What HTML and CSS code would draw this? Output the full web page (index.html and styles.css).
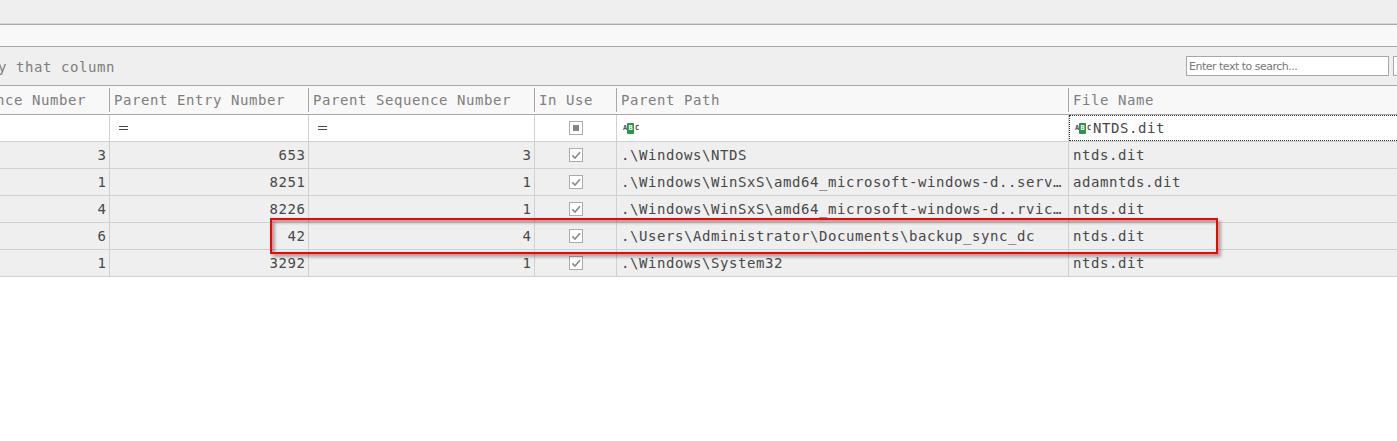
FILE: index.html
```html
<!DOCTYPE html>
<html lang="en">
<head>
<meta charset="utf-8">
<title>File listing</title>
<link rel="stylesheet" href="styles.css">
</head>
<body>
<svg class="defs" width="0" height="0">
  <symbol id="check" viewBox="0 0 14 14"><rect x=".5" y=".5" width="13" height="13" fill="#fff" stroke="#ababab"/><path d="M3.300 7.400 6 10l5-5.700" fill="none" stroke="#8c8c8c" stroke-width="1.7"/></symbol>
  <symbol id="mixed" viewBox="0 0 14 14"><rect x=".5" y=".5" width="13" height="13" fill="#fff" stroke="#ababab"/><path d="M4 4h6v6H4z" fill="#888"/></symbol>
  <symbol id="equals" viewBox="0 0 9 4"><path d="M0 .5h9M0 3.500h9" stroke="#484848"/></symbol>
</svg>
<div class="topbar"></div>
<div class="strip"></div>
<div class="group-panel">
  <span class="hint">y that column</span>
  <div class="search">Enter text to search...</div>
  <div class="find"></div>
</div>
<main class="grid">
  <div class="row header">
    <div class="cell clipped"><span>nce Number</span></div><div class="cell">Parent Entry Number</div><div class="cell">Parent Sequence Number</div><div class="cell">In Use</div><div class="cell">Parent Path</div><div class="cell">File Name</div>
  </div>
  <div class="row filter">
    <div class="cell"></div>
    <div class="cell"><svg class="equals"><use href="#equals"/></svg></div>
    <div class="cell"><svg class="equals"><use href="#equals"/></svg></div>
    <div class="cell center"><svg class="box"><use href="#mixed"/></svg></div>
    <div class="cell"><span class="abc"><i>A</i><b>B</b><i>C</i></span></div>
    <div class="cell focused"><span class="abc"><i>A</i><b>B</b><i>C</i></span><span class="value">NTDS.dit</span></div>
  </div>
  <div class="row"><div class="cell num">3</div><div class="cell num">653</div><div class="cell num">3</div><div class="cell center"><svg class="box"><use href="#check"/></svg></div><div class="cell">.\Windows\NTDS</div><div class="cell">ntds.dit</div></div>
  <div class="row"><div class="cell num">1</div><div class="cell num">8251</div><div class="cell num">1</div><div class="cell center"><svg class="box"><use href="#check"/></svg></div><div class="cell">.\Windows\WinSxS\amd64_microsoft-windows-d..serv…</div><div class="cell">adamntds.dit</div></div>
  <div class="row"><div class="cell num">4</div><div class="cell num">8226</div><div class="cell num">1</div><div class="cell center"><svg class="box"><use href="#check"/></svg></div><div class="cell">.\Windows\WinSxS\amd64_microsoft-windows-d..rvic…</div><div class="cell">ntds.dit</div></div>
  <div class="row"><div class="cell num">6</div><div class="cell num">42</div><div class="cell num">4</div><div class="cell center"><svg class="box"><use href="#check"/></svg></div><div class="cell">.\Users\Administrator\Documents\backup_sync_dc</div><div class="cell">ntds.dit</div></div>
  <div class="row"><div class="cell num">1</div><div class="cell num">3292</div><div class="cell num">1</div><div class="cell center"><svg class="box"><use href="#check"/></svg></div><div class="cell">.\Windows\System32</div><div class="cell">ntds.dit</div></div>
  <div class="highlight"></div>
</main>
</body>
</html>
```
FILE: styles.css
```css
* { box-sizing: border-box; }
body {
  margin: 0;
  height: 441px;
  overflow: hidden;
  background: #fff;
  color: #484848;
  font: 14px/26px "DejaVu Sans Mono", monospace;
  letter-spacing: 0.572px;
}
.defs { position: absolute; }
.topbar {
  height: 25px;
  background: #efefef;
  border-bottom: 1px solid #a8a8a8;
  box-shadow: inset 0 -1px #d8d8d8;
}
.strip {
  height: 22px;
  background: #f8f8f8;
  border-bottom: 1px solid #a8a8a8;
}
.group-panel {
  display: flex;
  height: 39px;
  padding-top: 9px;
  background: #efefef;
  border-bottom: 1px solid #a8a8a8;
  color: #7e7e7e;
}
.hint {
  width: 1186px;
  margin-left: -2px;
  margin-right: 2px;
  line-height: 22px;
  flex: none;
}
.search, .find {
  flex: none;
  width: 203px;
  height: 20px;
  border: 1px solid #a8a8a8;
  background: #fff;
}
.search {
  padding: 1px 0 0 2px;
  font: 11px/18px "DejaVu Sans", sans-serif;
  letter-spacing: -0.5px;
  color: #777;
}
.find { width: 20px; margin-left: 4px; }
.grid { position: relative; }
.row {
  display: grid;
  grid-template-columns: 110px 199px 226px 82px 452px 328px;
  height: 27px;
  background: #efefef;
  border-bottom: 1px solid #d0d0d0;
}
.cell {
  display: flex;
  align-items: center;
  min-width: 0;
  padding-left: 4px;
  border-right: 1px solid #d0d0d0;
  white-space: pre;
  overflow: hidden;
}
.cell:last-child { border-right: 0; }
.num { justify-content: flex-end; padding-right: 2.500px; }
.center { justify-content: center; padding: 0; }
.header {
  height: 29px;
  background: #f8f8f8;
  border-bottom-color: #a8a8a8;
  color: #7e7e7e;
}
.header .cell {
  height: 24px;
  margin-top: 2px;
  border-color: #a8a8a8;
}
.header .clipped { padding-left: 0; overflow: visible; }
.clipped span { margin-left: -4px; }
.filter { background: #fff; }
.equals { width: 9px; height: 4px; margin-left: 5px; }
.box { width: 14px; height: 14px; flex: none; }
.abc {
  display: flex;
  align-items: center;
  width: 16px;
  height: 11px;
  margin-left: 2px;
  font: bold 7px/11px "DejaVu Sans Mono", monospace;
  letter-spacing: 0;
}
.abc i { width: 4px; font-style: normal; }
.abc b {
  width: 7px;
  height: 11px;
  margin-right: 1px;
  flex: none;
  border-radius: 1px;
  background: #2c9446;
  color: #fff;
  text-align: center;
}
.focused { border: 1px dotted #333; padding-left: 3px; }
.focused .value { margin-left: 2px; }
.focused:last-child { border: 1px dotted #333; border-right: 0; }
.highlight {
  position: absolute;
  left: 270px;
  top: 132px;
  width: 948px;
  height: 36px;
  border: 2px solid #f00;
  box-shadow: 3px 3px 3px rgba(0,0,0,.3), inset 3px 3px 3px rgba(0,0,0,.3);
}
```
